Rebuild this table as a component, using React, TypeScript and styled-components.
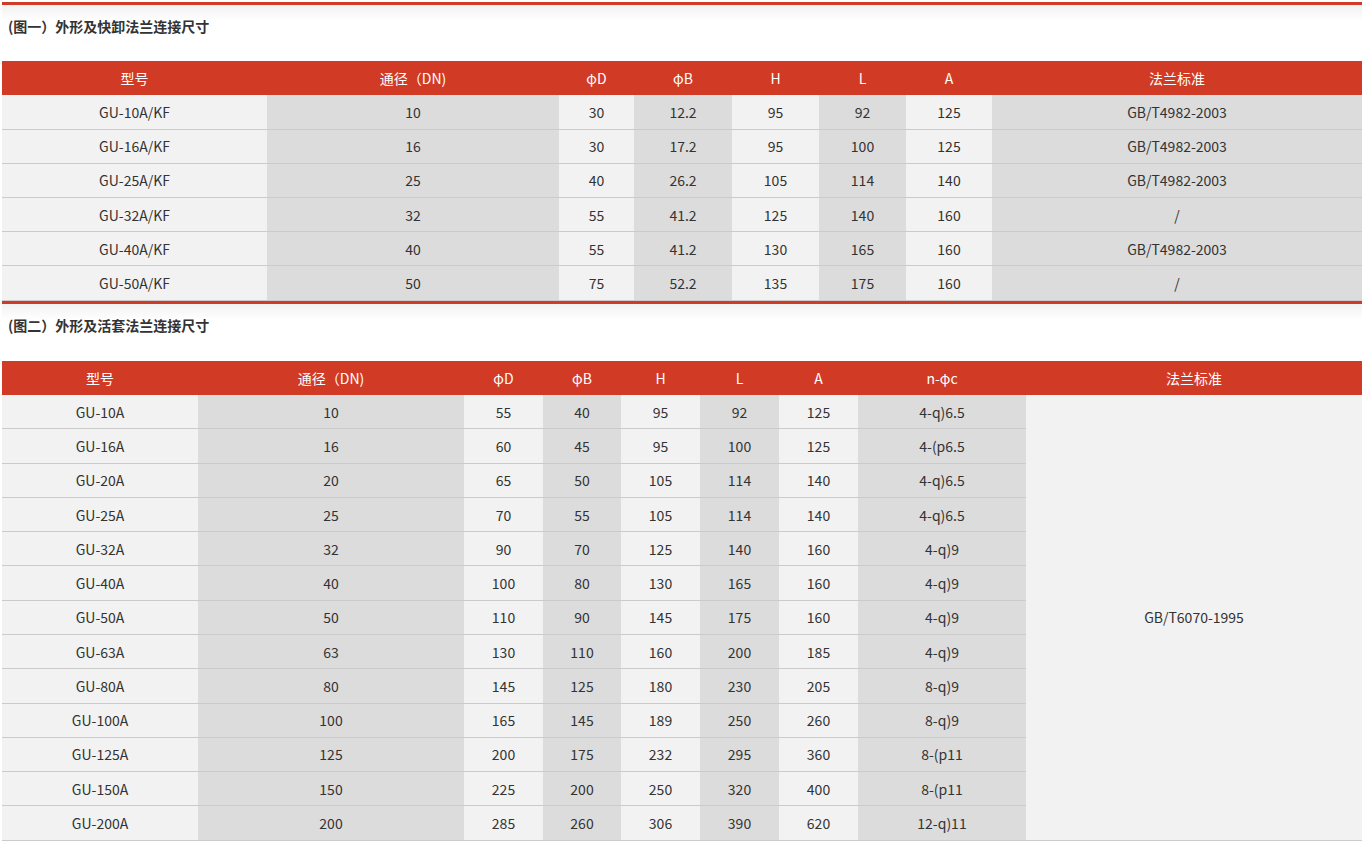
import React from 'react';
import styled, { createGlobalStyle } from 'styled-components';

const brandRed = '#d13a24';
const lightCell = '#f2f2f2';
const darkCell = '#dcdcdc';
const textColor = '#333';

const GlobalStyle = createGlobalStyle`
  html, body {
    margin: 0;
    padding: 0;
    background: #fff;
  }
  body {
    font-family: "Noto Sans CJK SC", "Noto Sans", sans-serif;
    color: ${textColor};
    overflow: hidden;
  }
`;

const Page = styled.div`
  width: 1360px;
  padding: 2px 0 0 2px;
`;

const Section = styled.section`
  border-top: 3px solid ${brandRed};
  background: linear-gradient(to bottom, #f2f2f2 0px, #ffffff 16px);
`;

const SectionTitle = styled.h3<{ $h: number }>`
  margin: 0;
  padding: 11px 0 0 6px;
  height: ${p => p.$h}px;
  box-sizing: border-box;
  font-size: 14px;
  line-height: 20px;
  font-weight: 700;
  color: ${textColor};
`;

const SpecTable = styled.table`
  width: 1360px;
  border-collapse: collapse;
  table-layout: fixed;
  font-size: 14px;
`;

const HeadCell = styled.th`
  height: 34px;
  padding: 0;
  background: ${brandRed};
  color: #fff;
  font-weight: 400;
  text-align: center;
  vertical-align: middle;
`;

const BodyRow = styled.tr<{ $h: number }>`
  height: ${p => p.$h}px;
`;

const BodyCell = styled.td<{ $dark: boolean }>`
  padding: 0;
  background: ${p => (p.$dark ? darkCell : lightCell)};
  border-bottom: 1px solid #cbcbcb;
  color: ${textColor};
  text-align: center;
  vertical-align: middle;
  line-height: 20px;
`;

interface TableSpec {
  title: string;
  titleHeight: number;
  widths: number[];
  headers: string[];
  rows: string[][];
  rowHeight: number;
  spanText?: string;
}

const quickRows = [
  ['GU-10A/KF', '10', '30', '12.2', '95', '92', '125', 'GB/T4982-2003'],
  ['GU-16A/KF', '16', '30', '17.2', '95', '100', '125', 'GB/T4982-2003'],
  ['GU-25A/KF', '25', '40', '26.2', '105', '114', '140', 'GB/T4982-2003'],
  ['GU-32A/KF', '32', '55', '41.2', '125', '140', '160', '/'],
  ['GU-40A/KF', '40', '55', '41.2', '130', '165', '160', 'GB/T4982-2003'],
  ['GU-50A/KF', '50', '75', '52.2', '135', '175', '160', '/'],
];

const looseRows = [
  ['GU-10A', '10', '55', '40', '95', '92', '125', '4-q)6.5'],
  ['GU-16A', '16', '60', '45', '95', '100', '125', '4-(p6.5'],
  ['GU-20A', '20', '65', '50', '105', '114', '140', '4-q)6.5'],
  ['GU-25A', '25', '70', '55', '105', '114', '140', '4-q)6.5'],
  ['GU-32A', '32', '90', '70', '125', '140', '160', '4-q)9'],
  ['GU-40A', '40', '100', '80', '130', '165', '160', '4-q)9'],
  ['GU-50A', '50', '110', '90', '145', '175', '160', '4-q)9'],
  ['GU-63A', '63', '130', '110', '160', '200', '185', '4-q)9'],
  ['GU-80A', '80', '145', '125', '180', '230', '205', '8-q)9'],
  ['GU-100A', '100', '165', '145', '189', '250', '260', '8-q)9'],
  ['GU-125A', '125', '200', '175', '232', '295', '360', '8-(p11'],
  ['GU-150A', '150', '225', '200', '250', '320', '400', '8-(p11'],
  ['GU-200A', '200', '285', '260', '306', '390', '620', '12-q)11'],
];

const tables: TableSpec[] = [
  {
    title: '(图一）外形及快卸法兰连接尺寸',
    titleHeight: 56,
    widths: [265, 292, 75, 98, 87, 87, 86, 370],
    headers: ['型号', '通径（DN)', 'φD', 'φB', 'H', 'L', 'A', '法兰标准'],
    rows: quickRows,
    rowHeight: 34.2,
  },
  {
    title: '(图二）外形及活套法兰连接尺寸',
    titleHeight: 57,
    widths: [196, 266, 79, 78, 79, 79, 79, 168, 336],
    headers: ['型号', '通径（DN)', 'φD', 'φB', 'H', 'L', 'A', 'n-φc', '法兰标准'],
    rows: looseRows,
    rowHeight: 34.28,
    spanText: 'GB/T6070-1995',
  },
];

const SizeTable: React.FC<{ spec: TableSpec }> = ({ spec }) => (
  <Section>
    <SectionTitle $h={spec.titleHeight}>{spec.title}</SectionTitle>
    <SpecTable>
      <colgroup>
        {spec.widths.map((w, i) => (
          <col key={i} style={{ width: w }} />
        ))}
      </colgroup>
      <thead>
        <tr>
          {spec.headers.map(h => (
            <HeadCell key={h}>{h}</HeadCell>
          ))}
        </tr>
      </thead>
      <tbody>
        {spec.rows.map((row, r) => (
          <BodyRow key={r} $h={spec.rowHeight}>
            {row.map((cell, c) => (
              <BodyCell key={c} $dark={c % 2 === 1}>
                {cell}
              </BodyCell>
            ))}
            {spec.spanText && r === 0 && (
              <BodyCell $dark={false} rowSpan={spec.rows.length}>
                {spec.spanText}
              </BodyCell>
            )}
          </BodyRow>
        ))}
      </tbody>
    </SpecTable>
  </Section>
);

export default function App() {
  return (
    <>
      <GlobalStyle />
      <Page>
        {tables.map(t => (
          <SizeTable key={t.title} spec={t} />
        ))}
      </Page>
    </>
  );
}
